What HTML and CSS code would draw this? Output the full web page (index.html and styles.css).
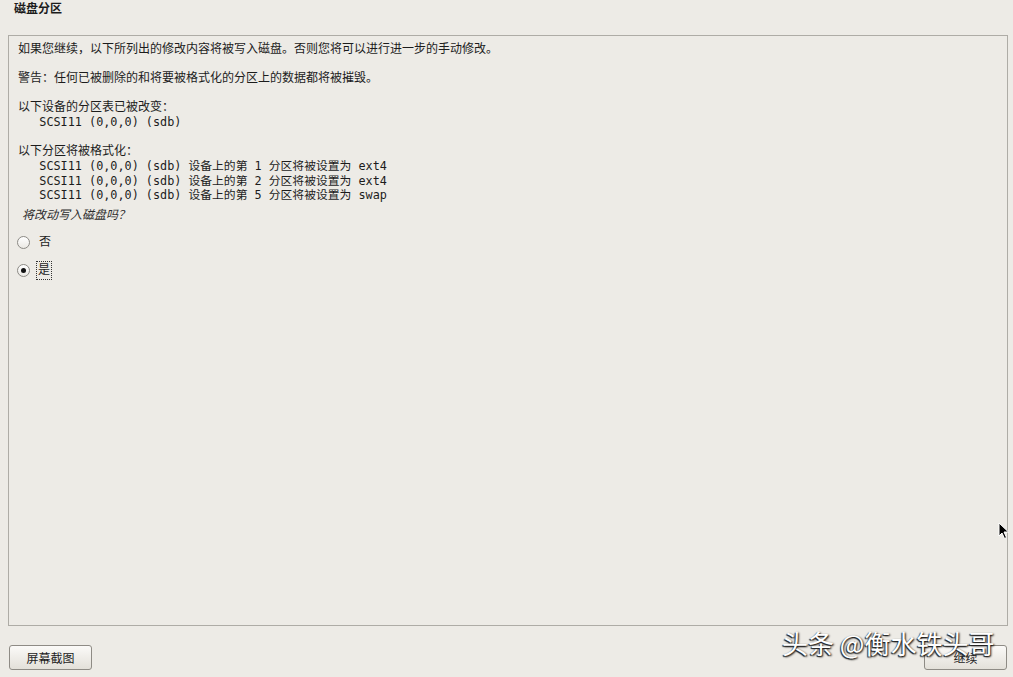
FILE: index.html
```html
<!DOCTYPE html>
<html lang="zh-CN">

<head>
  <meta charset="UTF-8">
  <meta name="viewport" content="width=device-width, initial-scale=1.0">
  <title>磁盘分区</title>
  <link rel="stylesheet" href="styles.css">
</head>

<body>
  <div class="page">
    <div class="header">
      <h1>磁盘分区</h1>
    </div>

    <div class="panel">
      <p>如果您继续，以下所列出的修改内容将被写入磁盘。否则您将可以进行进一步的手动修改。</p>
      <p class="gap">警告：任何已被删除的和将要被格式化的分区上的数据都将被摧毁。</p>

      <p class="gap">以下设备的分区表已被改变：</p>
      <pre class="dev">   SCSI11 (0,0,0) (sdb)</pre>

      <p class="gap">以下分区将被格式化：</p>
      <pre class="dev">   SCSI11 (0,0,0) (sdb) 设备上的第 1 分区将被设置为 ext4
   SCSI11 (0,0,0) (sdb) 设备上的第 2 分区将被设置为 ext4
   SCSI11 (0,0,0) (sdb) 设备上的第 5 分区将被设置为 swap</pre>

      <p class="ask">将改动写入磁盘吗？</p>

      <div class="choices">
        <label class="choice">
          <span class="radio"></span>
          <span class="choice-text">否</span>
        </label>
        <label class="choice">
          <span class="radio checked"></span>
          <span class="choice-text focus">是</span>
        </label>
      </div>
    </div>

    <div class="footer">
      <button class="btn">屏幕截图</button>
      <button class="btn">继续</button>
    </div>
  </div>

  <div class="watermark">头条 @衡水铁头哥</div>

  <svg class="cursor" width="12" height="18" viewBox="0 0 12 18">
    <path d="M1 1 L1 14 L4 11 L6.5 16.5 L8.5 15.5 L6 10 L10.5 10 Z" fill="#000" stroke="#fff" stroke-width="1"/>
  </svg>
</body>

</html>
```

FILE: styles.css
```css
body {
  font-family: "DejaVu Sans", "Noto Sans CJK SC", sans-serif;
  font-size: 12px;
  color: #1c1c1c;
  background-color: #edebe6;
  margin: 0;
  padding: 0;
}

.page {
  display: flex;
  flex-direction: column;
  height: 677px;
}

.header {
  height: 35px;
  padding-left: 14px;
  box-sizing: border-box;
}

h1 {
  font-size: 12px;
  font-weight: bold;
  margin: 0;
  padding-top: 2px;
  line-height: 14px;
}

.panel {
  flex: 1;
  margin: 0 5px 0 8px;
  border: 1px solid #aeaca6;
  padding: 6px 9px 0 9px;
  line-height: 14.6px;
}

p {
  margin: 0;
}

.gap {
  margin-top: 14.6px;
}

.dev {
  font-family: "DejaVu Sans Mono", "Noto Sans CJK SC", monospace;
  font-size: 11.8px;
  line-height: 14.7px;
  margin: 0;
}

.ask {
  font-style: italic;
  color: #2c2c2c;
  margin-top: 5px;
  padding-left: 4px;
}

.choices {
  margin-top: 6px;
}

.choice {
  display: flex;
  align-items: center;
  height: 28px;
}

.radio {
  width: 11px;
  height: 11px;
  margin-left: -1px;
  border: 1px solid #8c8a85;
  border-radius: 50%;
  background: linear-gradient(#ffffff, #ebe9e4);
  position: relative;
}

.radio.checked::after {
  content: "";
  position: absolute;
  left: 3px;
  top: 3px;
  width: 5px;
  height: 5px;
  border-radius: 50%;
  background-color: #111;
}

.choice-text {
  margin-left: 7px;
  padding: 1px 1px;
  border: 1px dotted transparent;
}

.choice-text.focus {
  border-color: #333;
  margin-left: 6px;
}

.footer {
  height: 51px;
  box-sizing: border-box;
  padding: 19px 6px 0 9px;
  display: flex;
  justify-content: space-between;
  align-items: flex-start;
}

.btn {
  width: 83px;
  height: 25px;
  font-family: "DejaVu Sans", "Noto Sans CJK SC", sans-serif;
  font-size: 12px;
  color: #1c1c1c;
  border: 1px solid #8e8b85;
  border-radius: 3px;
  background: linear-gradient(#fbfaf8, #e3e0d9);
  padding: 0;
}

.watermark {
  position: absolute;
  left: 782px;
  top: 624px;
  font-family: "Noto Sans CJK SC", sans-serif;
  font-size: 26px;
  line-height: 38px;
  color: #fff;
  text-shadow: -1px 1px 1px #222, 1px 1px 2px #000;
}

.cursor {
  position: absolute;
  left: 998px;
  top: 522px;
}
```
